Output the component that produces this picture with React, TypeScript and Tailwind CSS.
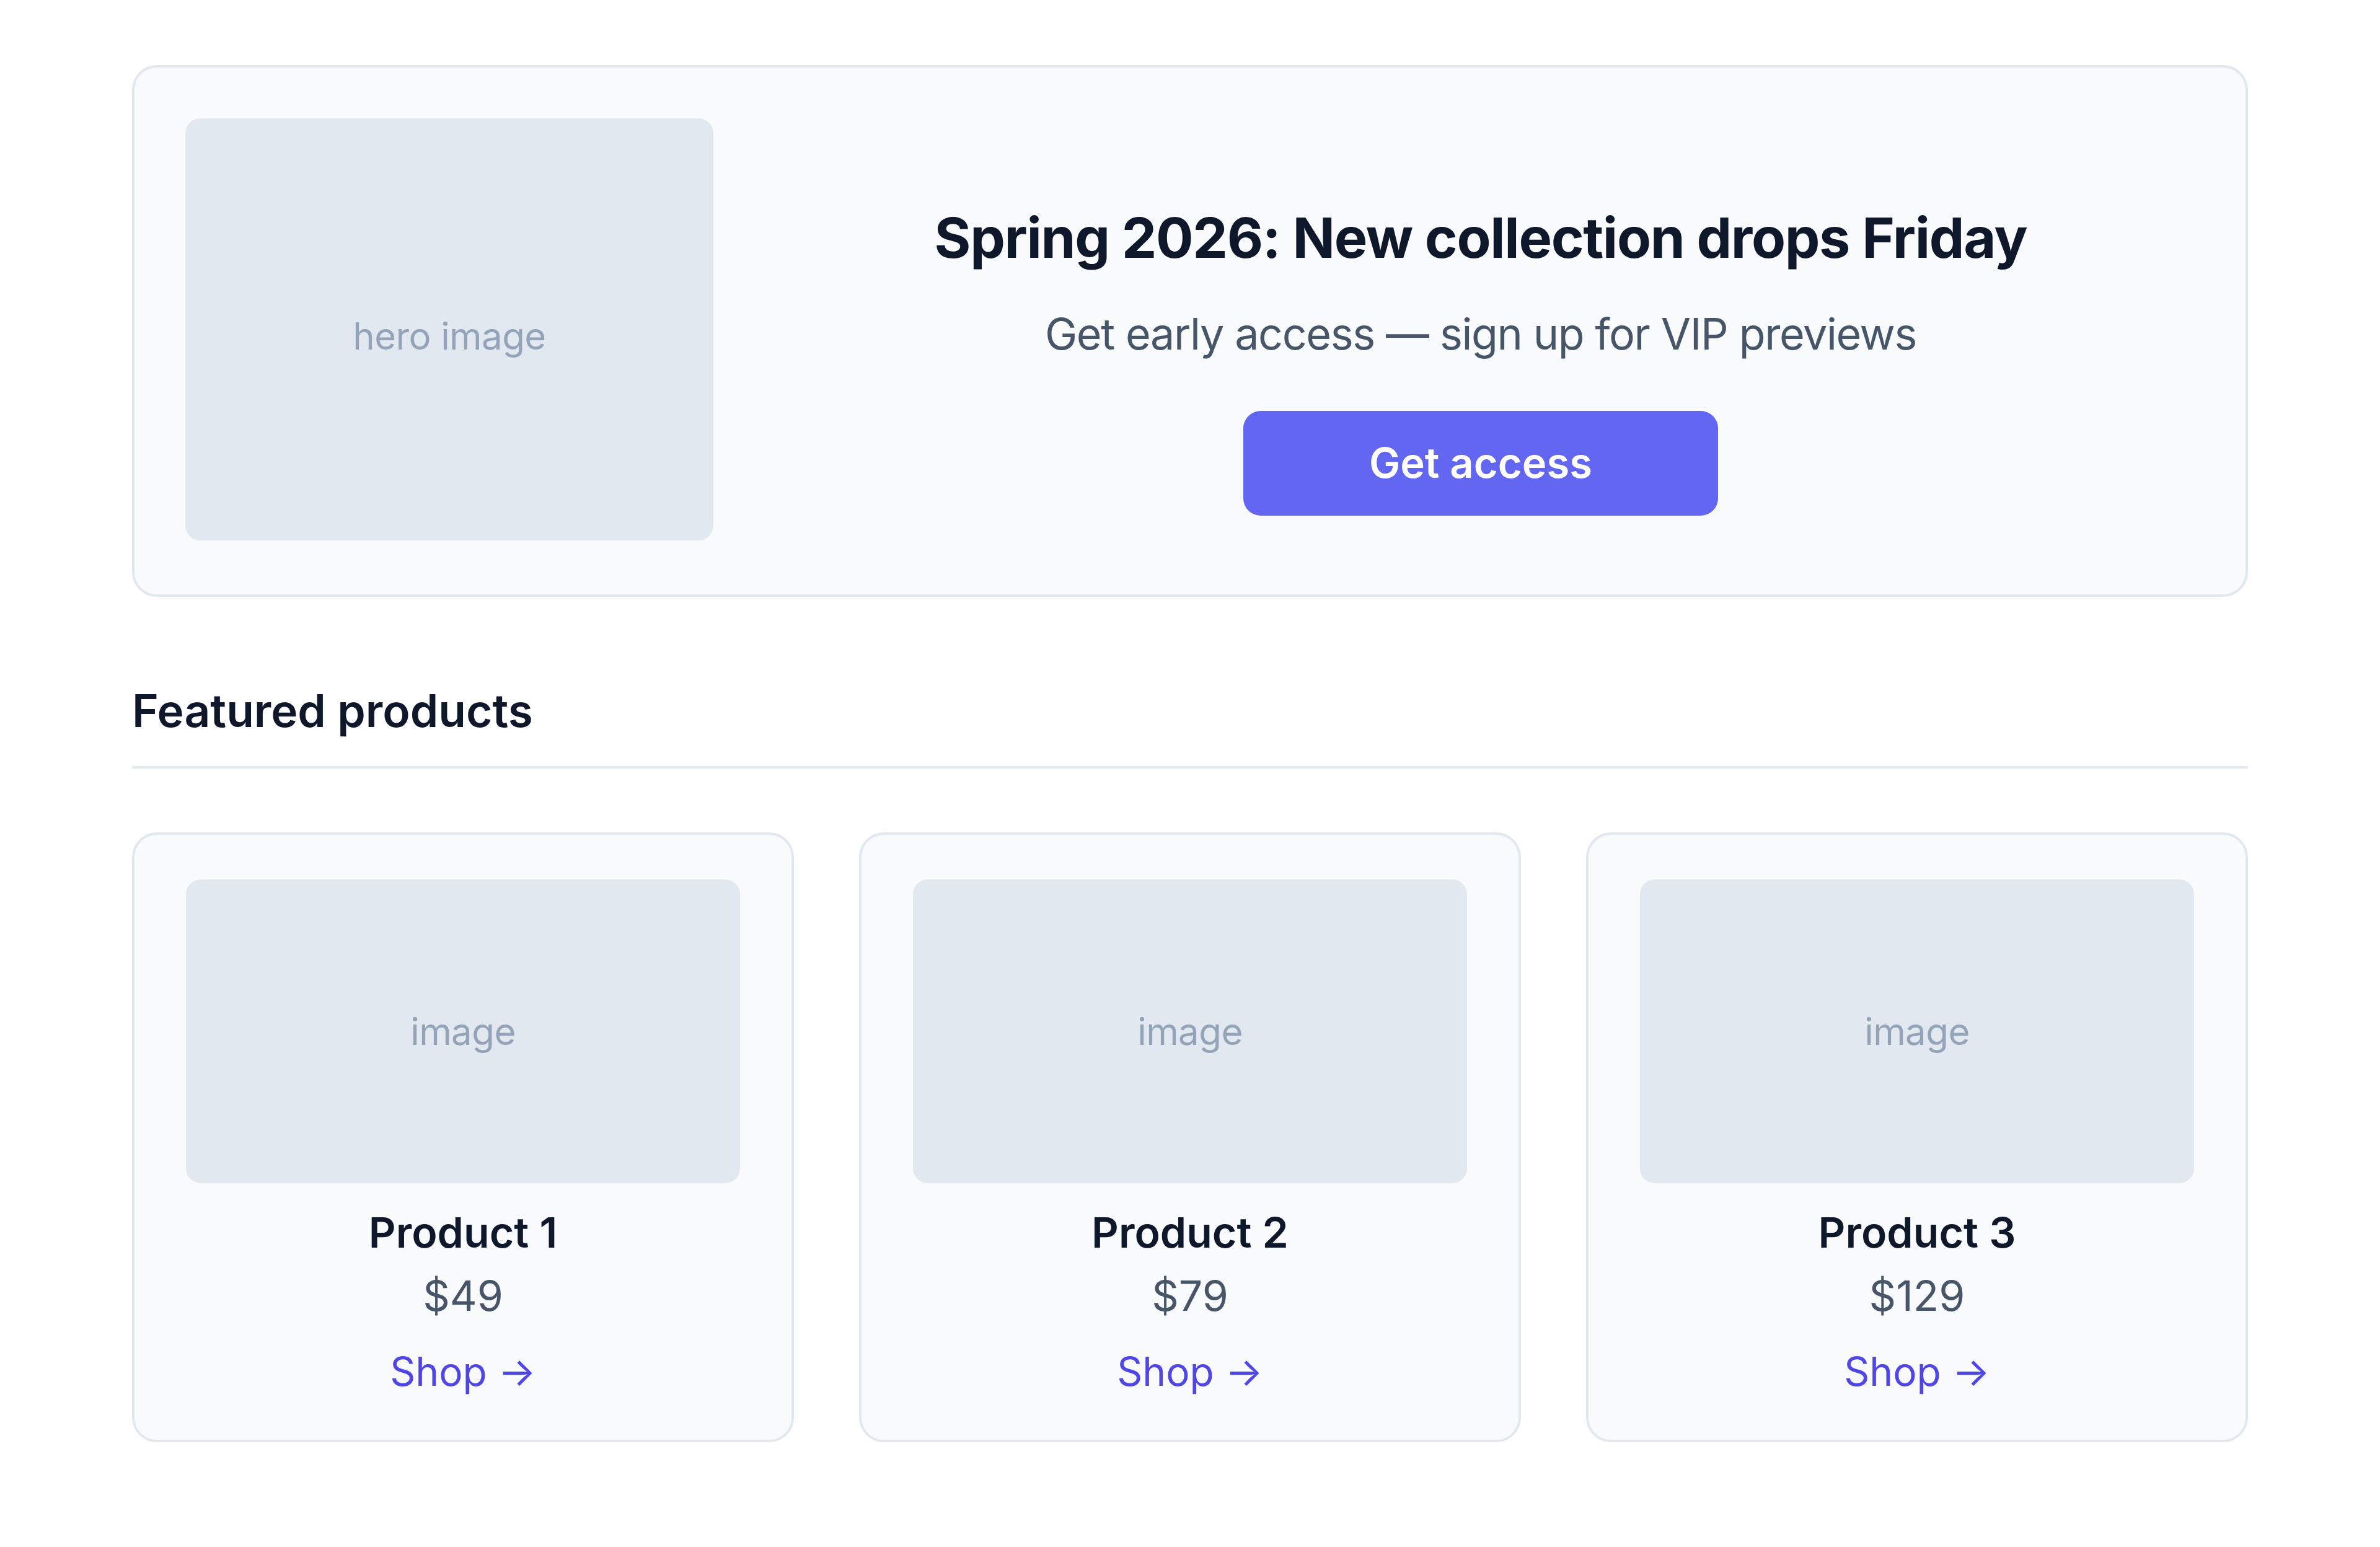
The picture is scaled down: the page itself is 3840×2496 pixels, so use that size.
const products = [
  { name: "Product 1", price: "$49" },
  { name: "Product 2", price: "$79" },
  { name: "Product 3", price: "$129" },
];

function Placeholder({ label, className = "" }: { label: string; className?: string }) {
  return (
    <div
      className={`flex items-center justify-center rounded-[24px] bg-[#e2e8f0] text-[60px] tracking-[-0.01em] text-[#94a3b8] ${className}`}
    >
      {label}
    </div>
  );
}

function ProductCard({ name, price }: { name: string; price: string }) {
  return (
    <div className="flex flex-col items-center rounded-[40px] border-4 border-[#e2e8f0] bg-[#f8fafc] px-[83px] pt-[72px] pb-[70px]">
      <Placeholder label="image" className="h-[490px] w-full" />
      <h3 className="mt-[39px] text-[68px] leading-[80px] font-semibold text-[#0f172a]">{name}</h3>
      <p className="mt-[22px] text-[68px] leading-[80px] text-[#475569]">{price}</p>
      <a href="#" className="mt-[43px] text-[64px] leading-[80px] text-[#4f46e5]">
        Shop →
      </a>
    </div>
  );
}

export default function App() {
  return (
    <div className="min-h-screen bg-white font-['Inter',sans-serif]">
      <div className="mx-auto w-[3414px] pt-[105px]">
        {/* Hero banner */}
        <section className="flex gap-[86px] rounded-[40px] border-4 border-[#e2e8f0] bg-[#f8fafc] px-[82px] pt-[82px] pb-[87px]">
          <Placeholder label="hero image" className="h-[681px] w-[852px] shrink-0 pt-[20px]" />
          <div className="flex flex-1 flex-col items-center pt-[138px]">
            <h1 className="text-[90px] leading-[110px] font-bold tracking-[-0.015em] text-[#0f172a]">
              Spring 2026: New collection drops Friday
            </h1>
            <p className="mt-[50px] text-[70px] leading-[100px] tracking-[-0.02em] text-[#475569]">
              Get early access — sign up for VIP previews
            </p>
            <button
              type="button"
              className="mt-[74px] flex h-[169px] w-[766px] items-center justify-center rounded-[28px] bg-[#6366f1] text-[67px] font-semibold text-white"
            >
              Get access
            </button>
          </div>
        </section>

        {/* Featured products */}
        <h2 className="mt-[134px] border-b-4 border-[#e2e8f0] pb-[39px] text-[73px] leading-[100px] font-semibold text-[#0f172a]">
          Featured products
        </h2>
        <div className="mt-[103px] grid grid-cols-3 gap-[105px]">
          {products.map((p) => (
            <ProductCard key={p.name} name={p.name} price={p.price} />
          ))}
        </div>
      </div>
    </div>
  );
}
